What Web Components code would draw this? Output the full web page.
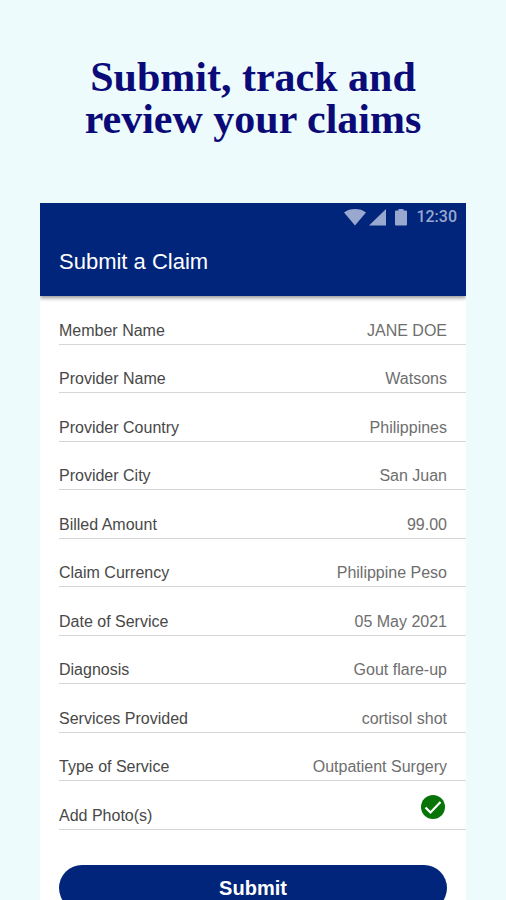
<!DOCTYPE html>
<html lang="en">
<head>
<meta charset="utf-8">
<meta name="viewport" content="width=device-width, initial-scale=1">
<title>Submit a Claim</title>
<style>
  body { margin: 0; background: #eefbfc; font-family: "Liberation Sans", Arial, sans-serif; }
</style>
</head>
<body>
<promo-page>
  <span slot="headline">Submit, track and<br>review your claims</span>
  <phone-screen>
    <app-header slot="header" time="12:30">Submit a Claim</app-header>
    <claim-form>
      <claim-field label="Member Name" value="JANE DOE"></claim-field>
      <claim-field label="Provider Name" value="Watsons"></claim-field>
      <claim-field label="Provider Country" value="Philippines"></claim-field>
      <claim-field label="Provider City" value="San Juan"></claim-field>
      <claim-field label="Billed Amount" value="99.00"></claim-field>
      <claim-field label="Claim Currency" value="Philippine Peso"></claim-field>
      <claim-field label="Date of Service" value="05 May 2021"></claim-field>
      <claim-field label="Diagnosis" value="Gout flare-up"></claim-field>
      <claim-field label="Services Provided" value="cortisol shot"></claim-field>
      <claim-field label="Type of Service" value="Outpatient Surgery"></claim-field>
      <claim-field label="Add Photo(s)"><check-badge></check-badge></claim-field>
      <pill-button slot="action">Submit</pill-button>
    </claim-form>
  </phone-screen>
</promo-page>

<script>
  const define = (name, html, setup) => {
    const template = document.createElement('template');
    template.innerHTML = html;
    customElements.define(name, class extends HTMLElement {
      constructor() {
        super();
        this.attachShadow({ mode: 'open' }).append(template.content.cloneNode(true));
      }
      connectedCallback() { if (setup) setup(this, this.shadowRoot); }
    });
  };

  define('promo-page', `
    <style>
      :host { display: flex; flex-direction: column; height: 100vh; overflow: hidden; }
      h1 { margin: 0; padding: 56px 16px 63px; text-align: center; color: #0a0b78;
           font: bold 42px/42px "Liberation Serif", "Times New Roman", serif; }
      main { flex: 1 0 auto; display: flex; flex-direction: column; padding: 0 40px; }
    </style>
    <h1><slot name="headline"></slot></h1>
    <main><slot></slot></main>`);

  define('phone-screen', `
    <style>
      :host { display: flex; flex-direction: column; flex: 1 0 auto; background: #fff; }
    </style>
    <slot name="header"></slot>
    <slot></slot>`);

  define('status-bar', `
    <style>
      :host { display: flex; justify-content: flex-end; align-items: center; height: 28px;
              padding-right: 9px; color: #99a8cf; font: 500 16px/20px Roboto, sans-serif; }
      svg { display: block; fill: currentColor; }
      .wifi { margin-right: 3px; }
      .cell, .battery { margin-right: 9px; }
    </style>
    <svg class="wifi" width="22" height="18" viewBox="0 0 22 18" aria-hidden="true"><path d="M11 17.5 0 4.4Q4.6 1 11 1t11 3.400Z"/></svg>
    <svg class="cell" width="17" height="18" viewBox="0 0 17 18" aria-hidden="true"><path d="M17 1v16.500H0Z"/></svg>
    <svg class="battery" width="12" height="18" viewBox="0 0 12 18" aria-hidden="true"><path d="M3.500 1h5v1.500H11q1 0 1 1v13q0 1-1 1H1q-1 0-1-1v-13q0-1 1-1h2.500Z"/></svg>
    <time></time>`,
    (el, root) => { root.querySelector('time').textContent = el.getAttribute('time'); });

  define('app-header', `
    <style>
      :host { display: block; background: #00257a; color: #fff; box-shadow: 0 2px 4px #0000006b; clip-path: inset(0 0 -8px); }
      h2 { margin: 0; padding: 17px 19px 20px; font-size: 22px; line-height: 28px; font-weight: 400; }
    </style>
    <status-bar></status-bar>
    <h2><slot></slot></h2>`,
    (el, root) => {
      const bar = root.querySelector('status-bar');
      bar.shadowRoot.querySelector('time').textContent = el.getAttribute('time');
      bar.setAttribute('time', el.getAttribute('time'));
    });

  define('claim-form', `
    <style>
      :host { display: block; }
      .fields { display: grid; grid-auto-rows: 1fr; min-height: 534px; padding-left: 19px; }
      .action { padding: 35px 19px; }
    </style>
    <form>
      <div class="fields"><slot></slot></div>
      <div class="action"><slot name="action"></slot></div>
    </form>`);

  define('claim-field', `
    <style>
      :host { display: flex; align-items: flex-end; gap: 12px; box-sizing: border-box;
              padding-right: 19px; border-bottom: 1px solid #d6d6d6; }
      label, input { font: 400 16px/20px "Liberation Sans", Arial, sans-serif; padding: 0; margin: 0 0 3px; }
      label { flex: none; color: #484848; }
      input { flex: 1; min-width: 0; height: 20px; border: 0; outline: 0; background: none;
              text-align: right; color: #6e6e6e; }
      .extra { margin-left: auto; padding: 0 2px 10px 0; }
    </style>
    <label for="value"></label>
    <input id="value" type="text">
    <div class="extra"><slot></slot></div>`,
    (el, root) => {
      const label = root.querySelector('label');
      const input = root.querySelector('input');
      label.textContent = el.getAttribute('label');
      if (el.hasAttribute('value')) {
        input.value = el.getAttribute('value');
        root.querySelector('.extra').remove();
      } else {
        label.removeAttribute('for');
        input.remove();
      }
    });

  define('check-badge', `
    <style>:host, svg { display: block; }</style>
    <svg width="24" height="24" viewBox="0 0 24 24" role="img" aria-label="Added">
      <circle cx="12" cy="12" r="12" fill="#087408"/>
      <path d="m4.500 12.500 5 5L19.500 7" fill="none" stroke="#fff" stroke-width="2.200"/>
    </svg>`);

  define('pill-button', `
    <style>
      :host { display: block; }
      button { display: block; width: 100%; height: 46px; padding: 0; border: 0; border-radius: 23px;
               background: #00257a; color: #fff; font: bold 20px/24px "Liberation Sans", Arial, sans-serif; }
    </style>
    <button type="button"><slot></slot></button>`);
</script>
</body>
</html>
